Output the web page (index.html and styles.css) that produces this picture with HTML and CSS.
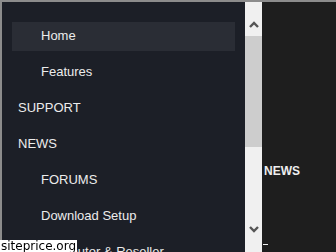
FILE: index.html
```html
<!DOCTYPE html>
<html lang="en">
<head>
    <meta charset="UTF-8">
    <meta name="viewport" content="width=device-width, initial-scale=1.0">
    <title>Menu</title>
    <link rel="stylesheet" href="styles.css">
</head>
<body>
    <div class="frame">
        <!-- Slide-out menu -->
        <nav class="side-menu">
            <ul class="menu-list">
                <li class="menu-item sub active"><a href="#">Home</a></li>
                <li class="menu-item sub"><a href="#">Features</a></li>
                <li class="menu-item"><a href="#">SUPPORT</a></li>
                <li class="menu-item"><a href="#">NEWS</a></li>
                <li class="menu-item sub"><a href="#">FORUMS</a></li>
                <li class="menu-item sub"><a href="#">Download Setup</a></li>
                <li class="menu-item sub"><a href="#">Distributor &amp; Reseller</a></li>
            </ul>
        </nav>

        <!-- Scrollbar -->
        <div class="scrollbar">
            <div class="scroll-btn">
                <svg width="10" height="7" viewBox="0 0 10 7"><path d="M1 6 L5 2 L9 6" fill="none" stroke="#555" stroke-width="2.4"/></svg>
            </div>
            <div class="scroll-thumb"></div>
            <div class="scroll-track"></div>
            <div class="scroll-btn">
                <svg width="10" height="7" viewBox="0 0 10 7"><path d="M1 1 L5 5 L9 1" fill="none" stroke="#555" stroke-width="2.4"/></svg>
            </div>
            <div class="scroll-rest"></div>
        </div>

        <!-- Page behind -->
        <div class="page-side">
            <h3 class="side-title">NEWS</h3>
            <span class="side-mark"></span>
        </div>
    </div>

    <div class="watermark">siteprice.org</div>
</body>
</html>
```

FILE: styles.css
```css
/* Reset */
* {
    margin: 0;
    padding: 0;
    box-sizing: border-box;
}

html, body {
    height: 100%;
    overflow: hidden;
}

body {
    background: #1e1e1e;
    font-family: "Liberation Sans", Arial, sans-serif;
    color: #ececec;
}

/* Outer frame */
.frame {
    display: flex;
    height: 100%;
    border-top: 2px solid #8c8c8c;
    border-left: 2px solid #8c8c8c;
}

/* Menu panel */
.side-menu {
    width: 243px;
    flex-shrink: 0;
    background: #1c1f27;
    padding-top: 16px;
}

.menu-list {
    list-style: none;
}

.menu-item {
    padding: 4px 10px 3px 10px;
}

.menu-item a {
    display: block;
    height: 29px;
    line-height: 27px;
    padding-left: 6px;
    font-size: 13px;
    color: #ececec;
    text-decoration: none;
    white-space: nowrap;
}

.menu-item.sub a {
    padding-left: 29px;
}

.menu-item.active a {
    background: #2a2d35;
}

/* Scrollbar */
.scrollbar {
    width: 17px;
    flex-shrink: 0;
    display: flex;
    flex-direction: column;
    background: #f0f0f0;
}

.scroll-btn {
    height: 16px;
    display: flex;
    align-items: center;
    justify-content: center;
}

.scrollbar .scroll-btn:first-child {
    height: 34px;
    padding-top: 10px;
}

.scroll-thumb {
    height: 111px;
    background: #cdcdcd;
}

.scroll-track {
    height: 74px;
}

.scroll-rest {
    flex: 1;
}

/* Right side of page */
.page-side {
    flex: 1;
    padding: 163px 0 0 2px;
}

.side-title {
    font-size: 12px;
    font-weight: bold;
    color: #eeeeee;
    line-height: 12px;
}

.side-mark {
    display: block;
    width: 5px;
    height: 1px;
    margin: 67px 0 0 -1px;
    background: #f0f0f0;
}

/* Watermark */
.watermark {
    position: fixed;
    left: 0;
    bottom: 0;
    height: 12px;
    padding: 0 1px;
    background: #ffffff;
    color: #000000;
    font-family: "DejaVu Sans", sans-serif;
    font-size: 12px;
    line-height: 12px;
}
```
